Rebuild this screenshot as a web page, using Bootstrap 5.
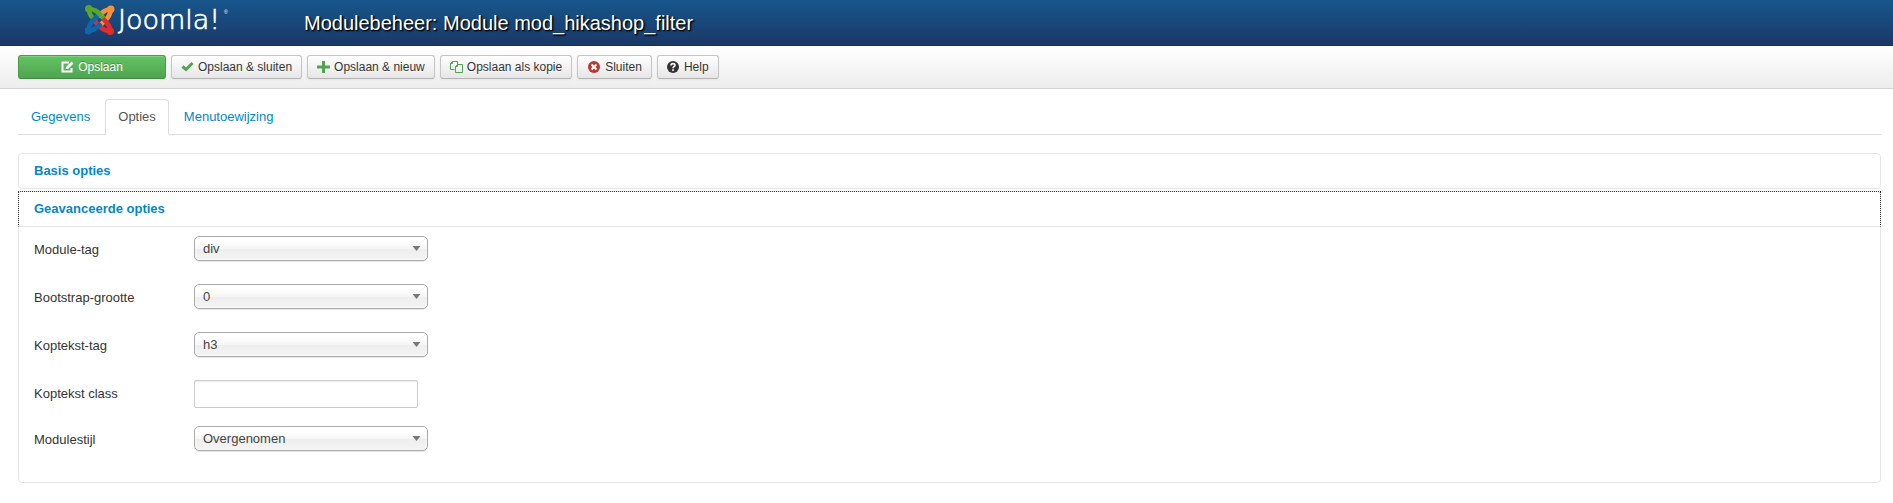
<!DOCTYPE html>
<html lang="nl">
<head>
<meta charset="utf-8">
<meta name="viewport" content="width=device-width, initial-scale=1">
<title>Modulebeheer: Module mod_hikashop_filter</title>
<link href="https://cdn.jsdelivr.net/npm/bootstrap@5.3.0/dist/css/bootstrap.min.css" rel="stylesheet">
<style>
body{font-family:"Liberation Sans",Arial,sans-serif;font-size:13px;line-height:18px;color:#333;background:#fff}
a{color:#08c}
.app-header{height:46px;background:linear-gradient(#17568c,#1a3867);border-bottom:1px solid #15305a}
.brand-area{width:286px;padding-left:67px}
.brand-area svg{display:block}
.brand-text{font-family:"DejaVu Sans",sans-serif;font-weight:200}
.page-title{font-size:20px;line-height:24px;color:#fff;text-shadow:1px 1px 1px #000,1px 1px 2px #000}
.app-toolbar{gap:5px;padding:9px 0 9px;background:linear-gradient(#fff,#ededed);border-bottom:1px solid #d3d3d3}
.btn-tool{display:inline-flex;align-items:center;gap:4px;height:24px;padding:0 9px;font-size:12px;line-height:18px;color:#333;text-shadow:0 1px 1px rgba(255,255,255,.75);background:linear-gradient(#fff,#e6e6e6);border:1px solid #c5c5c5;border-bottom-color:#b3b3b3;border-radius:3px;box-shadow:inset 0 1px 0 rgba(255,255,255,.2),0 1px 2px rgba(0,0,0,.05)}
.btn-save{width:148px;justify-content:center;color:#fff;text-shadow:0 -1px 0 rgba(0,0,0,.25);background:linear-gradient(#62c462,#51a351);border-color:#4a9c4a;border-bottom-color:#3d8b3d}
.edit-tabs{margin-top:10px;border-bottom:1px solid #ddd}
.edit-tabs .nav-link{padding:8px 12px;margin-right:2px;color:#08c;border-radius:4px 4px 0 0}
.edit-tabs .nav-link.active{color:#555;border-color:#ddd #ddd #fff}
.option-list{display:flex;flex-direction:column;gap:2px;padding-top:18px}
.option-group{border:1px solid #e5e5e5;border-radius:4px}
.option-head{display:block;padding:8px 15px;font-weight:bold;text-decoration:none}
.option-head.opened{border:1px dotted #333;border-bottom:1px solid #e5e5e5;margin:-1px -1px 0}
.option-body{padding:9px 15px 31px}
.option-row{margin-bottom:18px}
.option-row:last-child{margin-bottom:0}
.option-row label{width:160px;padding-top:5px}
.pick{width:234px;height:25px;margin-bottom:5px;padding:0 20px 0 8px;font-size:13px;line-height:23px;color:#444;border:1px solid #aaa;border-radius:5px;background:url("data:image/svg+xml,%3Csvg xmlns='http://www.w3.org/2000/svg' viewBox='0 0 8 5'%3E%3Cpath d='M0 0h8L4 5z' fill='%23777'/%3E%3C/svg%3E") no-repeat right 6px center/9px 5px,linear-gradient(#fff 20%,#f6f6f6 50%,#eee 52%,#f4f4f4);box-shadow:inset 0 0 3px #fff,0 1px 1px rgba(0,0,0,.1)}
.text-entry{width:224px;height:28px;padding:4px 6px;font-size:13px;border:1px solid #ccc;border-radius:2px;box-shadow:inset 0 1px 1px rgba(0,0,0,.075)}
.page-pad{padding-left:18px;padding-right:12px}
</style>
</head>
<body>
<header class="app-header d-flex align-items-center page-pad">
  <a class="brand-area flex-shrink-0" href="#" aria-label="Joomla!">
    <svg width="146" height="45" viewBox="0 0 146 45">
      <defs>
        <g id="strand">
          <circle cx="3.700" cy="3.700" r="3.700" stroke="none"/>
          <path fill="none" stroke-width="4.600" d="M4 4C4 8 5 10 7 12L11 16.500"/>
          <path fill="none" stroke-width="4.600" d="M4 4C8 4 10 5 12.500 7L19 13.500"/>
        </g>
      </defs>
      <g transform="translate(0 5)">
        <use href="#strand" fill="#5aa52b" stroke="#5aa52b"/>
        <use href="#strand" fill="#f9903c" stroke="#f9903c" transform="rotate(90 14.500 15)"/>
        <use href="#strand" fill="#e52b2b" stroke="#e52b2b" transform="rotate(180 14.500 15)"/>
        <use href="#strand" fill="#1067ad" stroke="#1067ad" transform="rotate(270 14.500 15)"/>
        <path fill="none" stroke="#5aa52b" stroke-width="4.600" d="M10 5.300Q11 5.800 12.500 7l4 4"/>
      </g>
      <text class="brand-text" x="33" y="29" font-size="27" fill="#fff" stroke="#fff" stroke-width=".7">Joomla!</text>
      <text x="139" y="14" font-size="5" fill="#fff">®</text>
    </svg>
  </a>
  <h1 class="page-title mb-0">Modulebeheer: Module mod_hikashop_filter</h1>
</header>

<div class="app-toolbar page-pad d-flex flex-wrap" role="toolbar" aria-label="Acties">
  <button type="button" class="btn btn-tool btn-save">
    <svg width="13" height="12" viewBox="0 0 13 12" fill="none" stroke="#fff"><path d="M8 1.500H1.500v9h9V7" stroke-width="2"/><path d="M4.500 8l.5-2 5.500-5.500 2 2L7 8z" fill="#fff" stroke="none"/></svg>Opslaan</button>
  <button type="button" class="btn btn-tool">
    <svg width="13" height="12" viewBox="0 0 13 12"><path d="M1.500 5.500L5 8.500l6.500-6.500" fill="none" stroke="#51a351" stroke-width="3"/></svg>Opslaan &amp; sluiten</button>
  <button type="button" class="btn btn-tool">
    <svg width="13" height="12" viewBox="0 0 13 12"><path d="M5 0h3v4.500h5v3H8V12H5V7.500H0v-3h5z" fill="#51a351"/></svg>Opslaan &amp; nieuw</button>
  <button type="button" class="btn btn-tool">
    <svg width="13" height="12" viewBox="0 0 13 12" fill="none" stroke="#51a351"><path d="M4.500 8.500h-4v-6l2-2h5v3"/><path d="M7.500 3.500h5v8h-7v-6zM5.500 5.500h2v-2M.5 2.500h2v-2"/></svg>Opslaan als kopie</button>
  <button type="button" class="btn btn-tool">
    <svg width="14" height="12" viewBox="0 0 14 12"><circle cx="7" cy="6" r="6" fill="#bd362f"/><path d="M4.500 3.500l5 5m0-5l-5 5" stroke="#fff" stroke-width="2"/></svg>Sluiten</button>
  <button type="button" class="btn btn-tool">
    <svg width="13" height="12" viewBox="0 0 13 12"><circle cx="6" cy="6" r="6" fill="#333"/><path d="M4 4.500C4 2 8 2 8 4.300 8 5.600 6 5.500 6 7.300M6 8.300v1.700" fill="none" stroke="#fff" stroke-width="1.600"/></svg>Help</button>
</div>

<main class="page-pad">
  <ul class="nav nav-tabs edit-tabs">
    <li class="nav-item"><a class="nav-link" href="#">Gegevens</a></li>
    <li class="nav-item"><a class="nav-link active" aria-current="page" href="#">Opties</a></li>
    <li class="nav-item"><a class="nav-link" href="#">Menutoewijzing</a></li>
  </ul>

  <div class="option-list">
    <section class="option-group">
      <a class="option-head" href="#">Basis opties</a>
    </section>
    <section class="option-group">
      <a class="option-head opened" href="#advanced">Geavanceerde opties</a>
      <form class="option-body" id="advanced">
        <div class="option-row d-flex">
          <label for="module_tag">Module-tag</label>
          <select class="pick form-select" id="module_tag"><option>div</option></select>
        </div>
        <div class="option-row d-flex">
          <label for="bootstrap_size">Bootstrap-grootte</label>
          <select class="pick form-select" id="bootstrap_size"><option>0</option></select>
        </div>
        <div class="option-row d-flex">
          <label for="header_tag">Koptekst-tag</label>
          <select class="pick form-select" id="header_tag"><option>h3</option></select>
        </div>
        <div class="option-row d-flex">
          <label for="header_class">Koptekst class</label>
          <input class="text-entry form-control" type="text" id="header_class">
        </div>
        <div class="option-row d-flex">
          <label for="module_style">Modulestijl</label>
          <select class="pick form-select mb-0" id="module_style"><option>Overgenomen</option></select>
        </div>
      </form>
    </section>
  </div>
</main>
<script src="https://cdn.jsdelivr.net/npm/bootstrap@5.3.0/dist/js/bootstrap.bundle.min.js"></script>
</body>
</html>
